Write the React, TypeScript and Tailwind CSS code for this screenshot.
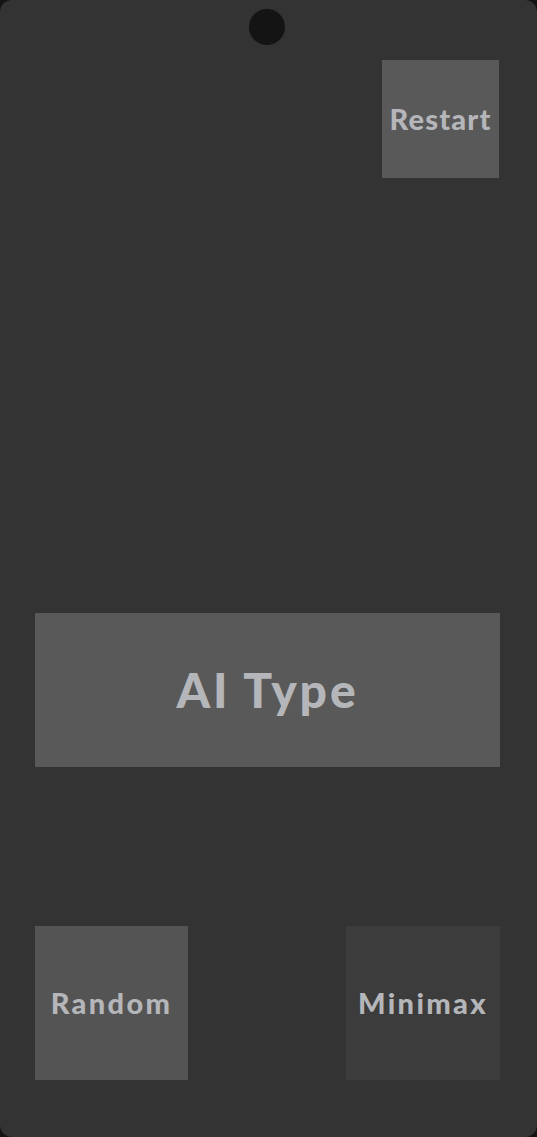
export default function App() {
  return (
    <div className="h-[1137px] w-[537px] bg-[#141414]" style={{ fontFamily: "Lato, 'Noto Sans', sans-serif" }}>
      <div className="flex h-full w-full flex-col rounded-[12px] bg-[#333333]">
        <div className="flex justify-center pt-[9px] pr-[3px]">
          <div className="h-[36px] w-[36px] rounded-full bg-[#141414]" />
        </div>

        <div className="mt-[15px] flex justify-end pr-[38px]">
          <button className="flex h-[118px] w-[117px] items-center justify-center bg-[#595959] text-[29px] font-black tracking-[0.04em] text-[#b5b6ba]">
            Restart
          </button>
        </div>

        <div className="mt-[435px] px-[35px] pr-[37px]">
          <button className="flex h-[154px] w-full items-center justify-center bg-[#595959] text-[48px] font-black tracking-[0.06em] text-[#b5b6ba]">
            AI Type
          </button>
        </div>

        <div className="mt-[159px] flex justify-between pl-[35px] pr-[37px]">
          <button className="flex h-[154px] w-[153px] items-center justify-center bg-[#545454] text-[29px] font-black tracking-[0.08em] text-[#b5b6ba]">
            Random
          </button>
          <button className="flex h-[154px] w-[154px] items-center justify-center bg-[#3c3c3c] text-[29px] font-black tracking-[0.08em] text-[#b5b6ba]">
            Minimax
          </button>
        </div>
      </div>
    </div>
  );
}
